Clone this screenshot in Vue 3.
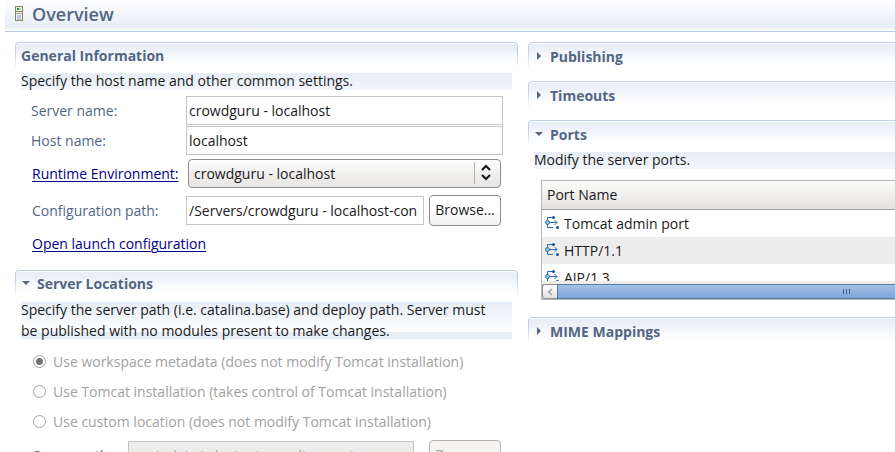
<script setup>
import { ref } from 'vue'

const serverName = ref('crowdguru - localhost')
const hostName = ref('localhost')
const runtime = ref('crowdguru - localhost')
const configPath = ref('/Servers/crowdguru - localhost-con')
const serverPath = ref('.metadata/.plugins/org.eclipse.wst')
const location = ref('workspace')

const locations = [
  { value: 'workspace', label: 'Use workspace metadata (does not modify Tomcat installation)' },
  { value: 'tomcat', label: 'Use Tomcat installation (takes control of Tomcat installation)' },
  { value: 'custom', label: 'Use custom location (does not modify Tomcat installation)' },
]
const ports = ['Tomcat admin port', 'HTTP/1.1', 'AJP/1.3']
</script>

<template>
  <div class="editor">
    <header class="titlebar">
      <svg class="server-icon" width="9" height="16" viewBox="0 0 9 16" aria-hidden="true">
        <rect x="1.5" y="0.5" width="7" height="14" fill="#f4f4e6" stroke="#85876a" />
        <rect x="3" y="2" width="2" height="2" fill="#16a34a" />
        <rect x="5" y="2" width="2" height="2" fill="#b9d8b4" />
        <rect x="2" y="5" width="6" height="1" fill="#85876a" />
        <rect x="2" y="7" width="6" height="1" fill="#a9aa8c" />
        <rect x="3" y="9" width="4" height="5" fill="#bcc6ee" />
      </svg>
      <h1>Overview</h1>
    </header>

    <main class="columns">
      <div class="column">
        <section class="section general">
          <h2 class="section-head">General Information</h2>
          <p class="description">Specify the host name and other common settings.</p>
          <form class="form" @submit.prevent>
            <div class="row">
              <label for="server-name">Server name:</label>
              <input id="server-name" v-model="serverName" class="text" type="text" />
            </div>
            <div class="row">
              <label for="host-name">Host name:</label>
              <input id="host-name" v-model="hostName" class="text" type="text" />
            </div>
            <div class="row runtime">
              <a id="runtime-label" href="#runtime">Runtime Environment:</a>
              <div class="combo">
                <select id="runtime" v-model="runtime" aria-labelledby="runtime-label">
                  <option>crowdguru - localhost</option>
                </select>
                <svg class="combo-arrows" width="28" height="22" viewBox="0 0 28 22" aria-hidden="true">
                  <path d="M0.5 0V22" stroke="#b5b4b2" />
                  <path d="M8 8L12 4L16 8M8 13L12 17L16 13" fill="none" stroke="#111" stroke-width="2" />
                </svg>
              </div>
            </div>
            <div class="row config">
              <label for="config-path">Configuration path:</label>
              <input id="config-path" v-model="configPath" class="text" type="text" />
              <button type="button">Browse...</button>
            </div>
            <a class="launch" href="#launch">Open launch configuration</a>
          </form>
        </section>

        <section class="section">
          <h2 class="section-head">
            <button class="toggle" type="button" aria-expanded="true">
              <svg width="9" height="12" viewBox="0 0 9 12" aria-hidden="true"><path d="M1 3H9L5 7Z" fill="#526684" /></svg>
              Server Locations
            </button>
          </h2>
          <p class="description tall">Specify the server path (i.e. catalina.base) and deploy path. Server must be published with no modules present to make changes.</p>
          <div class="locations">
            <label v-for="item in locations" :key="item.value" class="radio">
              <input v-model="location" type="radio" name="location" :value="item.value" disabled />
              <span>{{ item.label }}</span>
            </label>
            <div class="row path">
              <label for="server-path">Server path:</label>
              <input id="server-path" v-model="serverPath" class="text" type="text" disabled />
              <button type="button" disabled>Browse...</button>
            </div>
          </div>
        </section>
      </div>

      <div class="column">
        <section class="section open">
          <h2 class="section-head">
            <button class="toggle" type="button" aria-expanded="false">
              <svg width="9" height="12" viewBox="0 0 9 12" aria-hidden="true"><path d="M3 1V9L7 5Z" fill="#526684" /></svg>
              Publishing
            </button>
          </h2>
        </section>
        <section class="section open">
          <h2 class="section-head">
            <button class="toggle" type="button" aria-expanded="false">
              <svg width="9" height="12" viewBox="0 0 9 12" aria-hidden="true"><path d="M3 1V9L7 5Z" fill="#526684" /></svg>
              Timeouts
            </button>
          </h2>
        </section>
        <section class="section open">
          <h2 class="section-head">
            <button class="toggle" type="button" aria-expanded="true">
              <svg width="9" height="12" viewBox="0 0 9 12" aria-hidden="true"><path d="M1 3H9L5 7Z" fill="#526684" /></svg>
              Ports
            </button>
          </h2>
          <p class="description">Modify the server ports.</p>
          <div class="ports">
            <div class="viewport">
              <table>
                <thead>
                  <tr><th scope="col">Port Name</th></tr>
                </thead>
                <tbody>
                  <tr v-for="port in ports" :key="port">
                    <td>
                      <div class="port">
                        <svg width="14" height="16" viewBox="0 0 14 16" aria-hidden="true">
                          <path d="M2.500 4V1.500H8M2.500 8V11.500H8M4 6.500H12M9.500 4L12 6.500L9.500 9" fill="none" stroke="#2a6cb0" />
                          <circle cx="2.500" cy="6.500" r="2" fill="#8fd0dc" stroke="#2a6cb0" />
                          <circle cx="8.500" cy="1.500" r="1.500" fill="#0f559f" />
                          <circle cx="12.500" cy="11.500" r="1.500" fill="#0f559f" />
                        </svg>
                        {{ port }}
                      </div>
                    </td>
                  </tr>
                </tbody>
              </table>
            </div>
            <div class="scrollbar">
              <button class="scroll-left" type="button" aria-label="Scroll left">
                <svg width="6" height="8" viewBox="0 0 6 8" aria-hidden="true"><path d="M5 1L1.500 4L5 7" fill="none" stroke="#a3a19f" stroke-width="1.500" /></svg>
              </button>
              <div class="thumb">
                <svg width="8" height="5" viewBox="0 0 8 5" aria-hidden="true"><path d="M0.500 0V5M3.500 0V5M6.500 0V5" stroke="#49668f" /></svg>
              </div>
            </div>
          </div>
        </section>
        <section class="section open">
          <h2 class="section-head">
            <button class="toggle" type="button" aria-expanded="false">
              <svg width="9" height="12" viewBox="0 0 9 12" aria-hidden="true"><path d="M3 1V9L7 5Z" fill="#526684" /></svg>
              MIME Mappings
            </button>
          </h2>
        </section>
      </div>
    </main>
  </div>
</template>

<style>
body {
  margin: 0;
  background: #fff;
}
</style>

<style scoped>
.editor {
  box-sizing: border-box;
  height: 100vh;
  overflow: hidden;
  padding-left: 5px;
  font: 14px/20px "Open Sans", "Noto Sans", sans-serif;
  color: #1a1a1a;
}
.editor *,
.editor *::before {
  box-sizing: border-box;
}
h1,
h2,
p {
  margin: 0;
}
input,
select,
button {
  font: inherit;
  color: inherit;
  margin: 0;
}
a {
  color: #00008b;
  text-underline-offset: 2px;
  text-decoration-thickness: 1px;
  justify-self: start;
}
.titlebar {
  display: flex;
  align-items: center;
  gap: 9px;
  height: 32px;
  padding: 0 9px 3px;
  border-bottom: 1px solid #b9cfe9;
  background: linear-gradient(#fefefe, #e6edf6 88%, #f8fafd 96%);
}
h1 {
  font-size: 18px;
  line-height: 24px;
  font-weight: 600;
  color: #526684;
}
.columns {
  display: grid;
  grid-template-columns: minmax(0, 503fr) minmax(0, 367fr);
  gap: 10px;
  padding: 10px 0 0 10px;
}
.section {
  position: relative;
  padding: 0 6px;
}
.section::before {
  content: "";
  position: absolute;
  inset: 0 0 auto;
  height: 28px;
  border: 1px solid #b9cfe9;
  border-bottom: 0;
  border-radius: 4px 4px 0 0;
  background: linear-gradient(#e6edf6, #fff);
  box-shadow: inset 0 1px #fff;
  mask: linear-gradient(#000 30%, transparent);
}
.section.open {
  padding-right: 0;
}
.section.open::before {
  border-right: 0;
  border-top-right-radius: 0;
}
.section-head {
  position: relative;
  height: 31px;
  padding-top: 4px;
  font-size: 14px;
  line-height: 20px;
  font-weight: 700;
  color: #526684;
}
.open .section-head {
  height: 39px;
  padding-top: 5px;
}
.open:has(.description) .section-head {
  height: 32px;
}
.toggle {
  display: flex;
  align-items: center;
  gap: 7px;
  padding: 0;
  border: 0;
  background: none;
}
.description {
  position: relative;
  padding-bottom: 2px;
  line-height: 15px;
  background: linear-gradient(#e6edf6, #f3f6fb);
}
.description.tall {
  margin-top: -2px;
  padding: 0 16px 0 0;
  line-height: 21px;
  background: linear-gradient(transparent 3px, #e6edf6 3px, #fff 33px, #e6edf6 33px 40px, transparent 40px);
}
.form {
  padding: 5px 9px 0 10px;
}
.row {
  display: grid;
  grid-template-columns: 155px minmax(0, 1fr);
  align-items: center;
  height: 30px;
  color: #526684;
}
.row label {
  padding-top: 2px;
}
.row.runtime {
  grid-template-columns: 156px minmax(0, 1fr);
  height: 37px;
  padding: 0 2px 0 1px;
}
.row.config,
.row.path {
  grid-template-columns: 154px minmax(0, 1fr) 72px;
  height: 36px;
  padding: 0 2px 0 1px;
}
.text {
  width: 100%;
  min-width: 0;
  height: 29px;
  padding: 0 2px;
  border: 1px solid #c5c5c5;
  border-radius: 0;
  background: #fff;
  color: #1a1a1a;
}
.row button {
  height: 31px;
  padding: 0;
  border: 1px solid #8f8e8c;
  border-radius: 4px;
  background: linear-gradient(#fff, #fff 50%, #f1f0ef);
  color: #1a1a1a;
}
.config .text {
  width: calc(100% - 5px);
}
.combo {
  position: relative;
  height: 29px;
}
.combo select {
  appearance: none;
  display: block;
  width: 100%;
  height: 29px;
  padding: 0 34px 0 5px;
  border: 1px solid #8f8e8c;
  border-radius: 4px;
  background: linear-gradient(#fff, #f1f0ef 50%, #e6e5e3);
  color: #1a1a1a;
}
.combo-arrows {
  position: absolute;
  top: 3px;
  right: -1px;
  pointer-events: none;
}
.launch {
  display: inline-block;
  margin: 6px 0 16px 1px;
}
.locations {
  padding: 6px 9px 0 12px;
}
.radio {
  display: flex;
  align-items: center;
  gap: 7px;
  height: 30px;
  color: #a3a19f;
}
.radio input {
  appearance: none;
  flex: none;
  width: 13px;
  height: 13px;
  margin-bottom: 2px;
  border: 1px solid #a3a19f;
  border-radius: 50%;
  background: #fff;
}
.radio input:checked {
  background: radial-gradient(circle, #757371 0 3px, #fff 4px);
}
.row.path {
  grid-template-columns: 95px minmax(0, 1fr) 72px;
  padding-left: 0;
}
.path .text {
  width: calc(100% - 15px);
  background: #edeceb;
  color: #a3a19f;
}
.path button {
  background: #f5f4f3;
  border-color: #b5b4b2;
  color: #a3a19f;
}
.ports {
  margin: 11px 0 17px 7px;
  border: 1px solid #b9b8b6;
  border-right: 0;
}
.viewport {
  height: 100px;
  overflow: hidden;
}
table {
  width: 100%;
  border-collapse: separate;
  border-spacing: 0;
}
th {
  height: 29px;
  padding: 0 5px;
  border-bottom: 1px solid #a3a19f;
  background: linear-gradient(#fafaf9, #f1f0ef 50%, #e2e1df);
  font-weight: 400;
  text-align: left;
}
td {
  height: 27px;
  padding: 0 3px;
}
tbody tr:nth-child(even) td {
  background: #ededed;
}
.port {
  display: flex;
  align-items: center;
  gap: 5px;
}
.scrollbar {
  display: flex;
  height: 18px;
  padding: 3px 0 0;
  background: #edeceb;
}
.scroll-left {
  display: grid;
  place-items: center;
  width: 15px;
  padding: 0;
  border: 1px solid #8f8e8c;
  border-right: 0;
  border-radius: 3px 0 0 3px;
  background: linear-gradient(#fff, #e2e1df);
}
.thumb {
  flex: 1;
  display: grid;
  align-items: center;
  justify-items: end;
  padding-right: 44px;
  border: 1px solid #5479ab;
  border-right: 0;
  background: linear-gradient(#a5c2e9, #8fb2e0 50%, #7fa4d7);
}
</style>
